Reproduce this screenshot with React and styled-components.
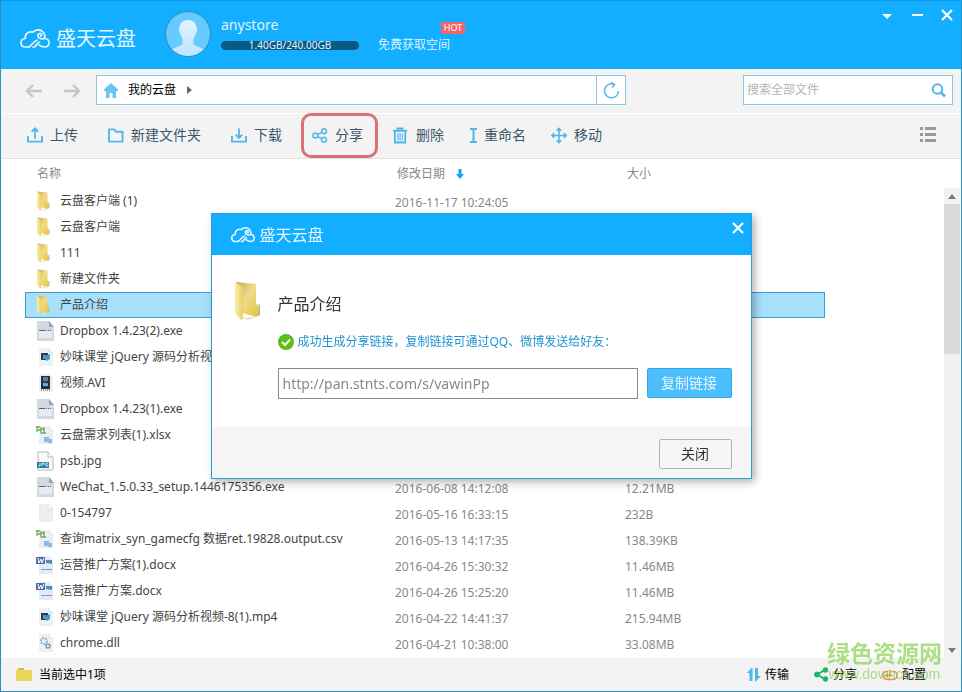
import React from 'react';
import styled, { createGlobalStyle, css } from 'styled-components';

const Global = createGlobalStyle`
  * { box-sizing: border-box; }
  body {
    margin: 0;
    font-family: "Noto Sans", "Noto Sans CJK SC", sans-serif;
    font-size: 12px;
    line-height: 16px;
    color: #444;
    background: #fff;
  }
  button, input { font: inherit; color: inherit; }
  button { padding: 0; border: 0; background: none; cursor: pointer; }
  svg { display: block; flex: none; }
`;

const Window = styled.div`
  position: relative;
  display: flex;
  flex-direction: column;
  min-height: 100vh;
  border: 1px solid #2791c4;
  border-top-color: #0798e6;
  background: #fff;
`;

/* ---------- header ---------- */
const Header = styled.header`
  display: flex;
  align-items: flex-start;
  height: 68px;
  padding: 0 5px 0 19px;
  background: #13aeff;
  color: #fff;
`;
const Brand = styled.div`
  display: flex;
  align-items: center;
  gap: 6px;
  height: 76px;
  font-size: 20px;
  line-height: 28px;
  color: #e6f8ff;
  white-space: nowrap;
`;
const Avatar = styled.div`
  margin: 10px 10px 0 29px;
`;
const Account = styled.div`
  width: 138px;
  padding-top: 14px;
`;
const UserName = styled.div`
  font-size: 14px;
  line-height: 20px;
  color: #e2f5ff;
`;
const Quota = styled.div`
  height: 9px;
  margin-top: 6px;
  border-radius: 5px;
  background: #0a5b84;
  font-size: 10px;
  line-height: 9px;
  text-align: center;
  color: #e8f6ff;
`;
const FreeSpace = styled.a`
  position: relative;
  margin: 36px 0 0 19px;
  color: #d8f3ff;
  text-decoration: none;
  white-space: nowrap;
`;
const HotBadge = styled.span`
  position: absolute;
  left: 63px;
  top: -15px;
  width: 24px;
  border-radius: 2px;
  background: #f4646a;
  color: #fff;
  font-size: 9px;
  line-height: 12px;
  text-align: center;
`;
const WindowControls = styled.div`
  display: flex;
  gap: 14px;
  margin-left: auto;
  padding-top: 5px;
`;

/* ---------- navigation ---------- */
const NavBar = styled.nav`
  display: flex;
  align-items: center;
  height: 45px;
  padding: 0 8px 2px 24px;
  border-bottom: 1px solid #fff;
  background: #f3f3f3;
`;
const Arrows = styled.div`
  display: flex;
  gap: 22px;
  margin-right: 15px;
`;
const Address = styled.div`
  display: flex;
  align-items: center;
  flex: 0 1 530px;
  height: 30px;
  padding-left: 7px;
  border: 1px solid #8fc5e0;
  background: #fff;
  color: #000;
`;
const Crumb = styled.a`
  display: flex;
  align-items: center;
  gap: 10px;
  color: #000;
  text-decoration: none;
`;
const Refresh = styled.button`
  display: grid;
  place-items: center;
  width: 29px;
  height: 28px;
  margin-left: auto;
  border-left: 1px solid #8fc5e0;
`;
const Search = styled.label`
  display: flex;
  align-items: center;
  width: 210px;
  height: 30px;
  margin-left: auto;
  padding: 0 6px 0 3px;
  border: 1px solid #8fc5e0;
  background: #fff;
`;
const SearchInput = styled.input`
  flex: 1;
  min-width: 0;
  padding: 0;
  border: 0;
  outline: 0;
  background: none;
  &::placeholder { color: #b4b4b4; opacity: 1; }
`;

/* ---------- toolbar ---------- */
const Toolbar = styled.div`
  display: flex;
  align-items: center;
  height: 45px;
  padding: 0 24px 2px 26px;
  border-bottom: 1px solid #e0e0e0;
  background: #f3f3f3;
`;
const ActionGroup = styled.div`
  display: flex;
  gap: ${(p) => (p.$tight ? 25 : 30)}px;
  margin-right: 26px;
`;
const Action = styled.button`
  position: relative;
  display: flex;
  align-items: center;
  gap: 7px;
  font-size: 14px;
  line-height: 20px;
  color: #3c566b;
  white-space: nowrap;
  ${(p) => p.$marked && css`
    &::after {
      content: "";
      position: absolute;
      inset: -12px -15px -13px -11px;
      border: 3px solid #d97274;
      border-radius: 10px;
    }
  `}
`;
const ViewToggle = styled.button`
  margin-left: auto;
`;

/* ---------- file list ---------- */
const Main = styled.main`
  display: flex;
  flex: 1;
  padding-right: 1px;
`;
const ListArea = styled.div`
  flex: 1;
  min-width: 0;
  padding-left: 24px;
`;
const FileTable = styled.table`
  width: 100%;
  max-width: 800px;
  border-collapse: collapse;
  table-layout: fixed;
`;
const Column = styled.col`
  width: ${(p) => p.$share}%;
`;
const HeadCell = styled.th`
  height: 29px;
  padding: 0 0 0 ${(p) => (p.$first ? 12 : 2)}px;
  font-weight: 400;
  text-align: left;
  color: #888;
`;
const HeadLabel = styled.span`
  display: flex;
  align-items: center;
  gap: 11px;
`;
const Row = styled.tr`
  height: 26px;
  ${(p) => p.$selected && css`
    background: #a6e0fd;
    outline: 1px solid #3b9fcd;
    outline-offset: -1px;
  `}
`;
const NameCell = styled.td`
  padding: 0 0 0 11px;
`;
const FileName = styled.span`
  display: flex;
  align-items: center;
  gap: 6px;
  white-space: nowrap;
`;
const MetaCell = styled.td`
  padding: 4px 0 0;
  color: #888;
  white-space: nowrap;
`;
const Scrollbar = styled.div`
  display: flex;
  flex-direction: column;
  width: 16px;
  margin-top: 29px;
  background: #f1f1f1;
`;
const ScrollButton = styled.button`
  display: grid;
  place-items: center;
  height: 16px;
`;
const Thumb = styled.div`
  flex: 0 0 32%;
  background: #dadada;
`;
const TrackSpace = styled.div`
  flex: 1;
`;

/* ---------- footer ---------- */
const Footer = styled.footer`
  display: flex;
  align-items: center;
  height: 33px;
  padding: 0 35px 0 15px;
  background: #f3f3f3;
  color: #000;
`;
const Status = styled.div`
  display: flex;
  align-items: center;
  gap: 7px;
  margin-right: auto;
`;
const FooterButton = styled.button`
  display: flex;
  align-items: center;
  gap: 4px;
  margin-left: 25px;
`;
const Watermark = styled.div`
  position: absolute;
  right: 19px;
  bottom: 10px;
  color: #8fd45c;
  text-align: center;
  opacity: 0.75;
  pointer-events: none;
`;
const WatermarkName = styled.div`
  font-size: 23px;
  font-weight: 700;
  line-height: 28px;
`;
const WatermarkSite = styled.div`
  font-family: "Liberation Sans", sans-serif;
  font-size: 14px;
  line-height: 14px;
`;

/* ---------- dialog ---------- */
const Overlay = styled.div`
  position: fixed;
  inset: 0;
  display: grid;
  place-items: center;
`;
const Dialog = styled.section`
  width: 541px;
  max-width: 100%;
  border: 1px solid #2a9fd6;
  background: #fff;
  box-shadow: 3px 3px 8px rgba(0, 0, 0, 0.3);
`;
const DialogHeader = styled.header`
  display: flex;
  align-items: center;
  gap: 5px;
  height: 41px;
  padding: 0 4px 0 19px;
  background: #13aeff;
  color: #e6f8ff;
`;
const DialogTitle = styled.h1`
  margin: 0;
  font-size: 16px;
  font-weight: 400;
  line-height: 24px;
`;
const DialogClose = styled.button`
  margin-left: auto;
  padding-bottom: 14px;
`;
const DialogBody = styled.div`
  display: grid;
  grid-template-columns: 44px 1fr;
  padding: 26px 19px 28px 22px;
`;
const ShareInfo = styled.div`
  display: flex;
  flex-direction: column;
  gap: 16px;
  padding-top: 11px;
`;
const ItemName = styled.h2`
  margin: 0;
  font-size: 16px;
  font-weight: 400;
  line-height: 24px;
  color: #333;
`;
const Success = styled.p`
  display: flex;
  align-items: center;
  gap: 4px;
  margin: 0;
  line-height: 20px;
  color: #1f93d3;
`;
const LinkRow = styled.div`
  display: flex;
  gap: 9px;
`;
const LinkInput = styled.input`
  flex: 1;
  min-width: 0;
  height: 31px;
  padding: 0 4px;
  border: 1px solid #8a8a8a;
  background: #fff;
  font-size: 14px;
  color: #888;
`;
const CopyButton = styled.button`
  width: 85px;
  height: 30px;
  border: 1px solid #2fa8ea;
  border-radius: 2px;
  background: #4bbefb;
  font-size: 14px;
  color: #e4f6ff;
`;
const DialogFooter = styled.footer`
  display: flex;
  justify-content: flex-end;
  padding: 12px 19px 9px;
  background: #f5f5f5;
`;
const CloseButton = styled.button`
  width: 73px;
  height: 30px;
  border: 1px solid #b4b4b4;
  border-radius: 2px;
  font-size: 14px;
  color: #333;
`;

/* ---------- drawings ---------- */
const Cloud = ({ width, stroke = 1.7 }) => (
  <svg width={width} height={width * 2 / 3} viewBox="0 0 30 20" fill="none" stroke="#e6f8ff" strokeWidth={stroke} strokeLinecap="round" strokeLinejoin="round">
    <path d="M9 18H5.500C2.800 18 1 16.300 1 14C1 11.500 2.800 9.700 5.300 9.500C4.600 5 8.500 1.800 12.800 3.200C15.500 .3 20.500 .2 23 3C24.800 4.800 25.200 7 24.500 9.500C27.300 9.600 29 11.500 29 13.800C29 16.300 27.200 18 24.500 18C22 18 20.500 17.300 18.800 15.800" />
    <path d="M9 18C12 16 13.500 12.500 17 11.200M13 18H14.500C16.500 16.500 17 13.500 19.500 13" />
    <path d="M24.500 9.500C21.500 10.500 18 9.300 17.800 6.800C17.700 4.800 20 3.800 21.300 5C22.200 6 21.500 7.200 20.500 7" />
  </svg>
);
const Person = () => (
  <svg width="46" height="46" viewBox="0 0 46 46">
    <defs>
      <clipPath id="face"><circle cx="23" cy="23" r="22" /></clipPath>
      <linearGradient id="skin" x2="0" y2="1"><stop stopColor="#e3f5ff" /><stop offset="1" stopColor="#b9e3ff" /></linearGradient>
    </defs>
    <circle cx="23" cy="23" r="22.500" fill="#66caff" stroke="#3189bd" />
    <path clipPath="url(#face)" fill="url(#skin)" d="M23 9C28 9 31.500 12 31.500 17C32.500 17.500 32.200 20.500 31 21.500C30.500 25 29 26.500 28.500 28V33C31 36 38 36 41 41V47H4V41C8 36 15 36 17.500 33V28C17 26.500 15.500 25 15 21.500C13.800 20.500 13.500 17.500 14.500 17C14.500 12 18 9 23 9Z" />
  </svg>
);
const Cross = () => (
  <svg width="18" height="18" viewBox="0 0 18 18" stroke="#fff" strokeWidth="2.200"><path d="M4 4L14 14M14 4L4 14" /></svg>
);
const NavArrow = ({ forward }) => (
  <svg width="17" height="16" viewBox="0 0 17 16" fill="none" stroke="#c6c6c6" strokeWidth="2.400">
    <path d={forward ? 'M0 9H15M9 3L15 9L9 15' : 'M17 9H2M8 3L2 9L8 15'} />
  </svg>
);
const blue = '#53b6e9';
const iconPaths = {
  upload: <path d="M1 9V15H16V9M8.500 12V1M5 4.500L8.500 1L12 4.500" />,
  newFolder: <path d="M1 2H6.500L8.500 4.500H15.500V15H1Z" strokeLinejoin="round" />,
  download: <path d="M1 9V15H16V9M8.500 1V11M5 7.500L8.500 11L12 7.500" />,
  share: <><circle cx="3.500" cy="8.500" r="2.600" /><circle cx="12.800" cy="4" r="2.600" /><circle cx="12.800" cy="13" r="2.600" /><path d="M6 7.500L10.500 5M6 9.700L10.500 12" /></>,
  remove: <><path d="M0 3.500H15M5 3V1H10V3M2 4V16H13V4" /><path d="M5.200 6V14M7.500 6V14M9.800 6V14" strokeWidth="1.200" /></>,
  rename: <path d="M0 2H7M0 15H7M3.500 2V15" />,
  move: <path d="M8.500 1V16M1 8.500H16M6 3.500L8.500 1L11 3.500M6 13.500L8.500 16L11 13.500M3.500 6L1 8.500L3.500 11M13.500 6L16 8.500L13.500 11" strokeWidth="1.700" />,
};
const ToolIcon = ({ name }) => {
  const narrow = name === 'rename';
  return (
    <svg width={narrow ? 7 : 16} height="17" viewBox={narrow ? '0 0 7 17' : '0 0 17 17'} fill="none" stroke={blue} strokeWidth={name === 'share' ? 1.600 : 2}>
      {iconPaths[name]}
    </svg>
  );
};
const Folder = ({ large }) => (
  <svg width={large ? 28 : 18} height={large ? 40 : 20} viewBox={large ? '0 0 28 40' : '-1 0 36 40'}>
    <defs>
      <linearGradient id="flap"><stop stopColor="#fbf1a5" /><stop offset="1" stopColor="#e8cf68" /></linearGradient>
      <linearGradient id="back" x2="1" y2="1"><stop stopColor="#c9a94f" /><stop offset=".45" stopColor="#efdb8b" /><stop offset="1" stopColor="#e6c23e" /></linearGradient>
    </defs>
    <path d="M8 37L22 36L14 39Z" fill="#ddd" />
    <path d="M2 1L22 3V23L25 26V34L22 36L8 32Z" fill="url(#back)" />
    <path d="M23 24H25.500V34H23" fill="none" stroke="#a9b2a0" />
    <path d="M1 1L8 6Q9 7 9 10V38L7 39L1 32Z" fill="url(#flap)" />
  </svg>
);
const sheet = (
  <>
    <path d="M3 1H13L17 5V19H3Z" fill="#eef0f2" />
    <path d="M13 1V5H17" fill="#fff" stroke="#ccd2d7" strokeWidth=".7" />
  </>
);
const fileArt = {
  exe: <><path d="M1 0H13L18 6V20H1Z" fill="#d3d9e1" /><path d="M13 0V6H18Z" fill="#98a5b5" /><path d="M3 10H16V17H3Z" fill="#e7ebef" /><path d="M3 9.500H9" stroke="#536477" /><path d="M10 9.500H16" stroke="#536477" strokeDasharray="1 1" /></>,
  video: <>{sheet}<path d="M5 6H12V13H5Z" fill="#27404f" /><path d="M7 8H10V12H7Z" fill="#7d8f8e" /><path d="M11 8L14 7V12L11 14L9 12Z" fill="#39a0dc" /></>,
  avi: <>{sheet}<path d="M5 3H14V16H5Z" fill="#26313c" /><path d="M7 4H12V8H7Z" fill="#3f86b8" /><path d="M7 10H12V13H7Z" fill="#6db3d8" /><path d="M8 8L11 11" stroke="#c0392b" /><path d="M5 17H14" stroke="#444" strokeDasharray="1 1" /></>,
  sheet: <><path d="M3 1H13L17 5V19H3Z" fill="#e6f0f6" /><path d="M0 1H10V9H0Z" fill="#fff" opacity=".6" /><path d="M0 2H4M1 2V7M5 2V9M5 4H9M6 8H10M8 2V8M2 5H5" stroke="#6da655" strokeWidth="1.300" fill="none" /><path d="M8 12H13V17H8ZM12 14H16V18H12Z" fill="#8fb9df" /></>,
  jpg: <><path d="M2 1H12L17 6V19H2Z" fill="#f8f9fa" stroke="#b4bbc1" /><path d="M12 1V6H17" fill="#fff" stroke="#b4bbc1" /><path d="M1 11H13V17H1Z" fill="#267f9e" /><path d="M4 12V15H2.500M6 15V12H8V14M10 12H12M10 12V15H12V14" stroke="#d6eef7" fill="none" /></>,
  blank: <><path d="M3 1H12L17 6V19H3Z" fill="#eeeeef" /><path d="M12 1L17 6H12Z" fill="#fff" stroke="#d8d8d8" strokeWidth=".7" /></>,
  doc: <><path d="M3 1H13L17 5V19H3Z" fill="#e3ebf8" /><path d="M0 2H9V9H0Z" fill="#4a6fae" /><path d="M2 3L3 8L5 4L6 8L8 3" stroke="#fff" fill="none" /><path d="M10 5H16V9L10 8Z" fill="#568da5" /><path d="M5 14.500H16" stroke="#8296c0" /></>,
  dll: <>{sheet}<circle cx="8" cy="8" r="3" fill="none" stroke="#8ab8d6" strokeWidth="2" strokeDasharray="2 1" /><circle cx="12" cy="13" r="2" fill="none" stroke="#7f9bb3" strokeWidth="1.500" /></>,
};
const FileIcon = ({ type }) =>
  type === 'folder' ? <Folder /> : <svg width="18" height="20" viewBox="0 0 18 20">{fileArt[type]}</svg>;

const files = [
  ['folder', '云盘客户端 (1)', '2016-11-17 10:24:05'],
  ['folder', '云盘客户端'],
  ['folder', '111'],
  ['folder', '新建文件夹'],
  ['folder', '产品介绍'],
  ['exe', 'Dropbox 1.4.23(2).exe'],
  ['video', '妙味课堂 jQuery 源码分析视'],
  ['avi', '视频.AVI'],
  ['exe', 'Dropbox 1.4.23(1).exe'],
  ['sheet', '云盘需求列表(1).xlsx'],
  ['jpg', 'psb.jpg'],
  ['exe', 'WeChat_1.5.0.33_setup.1446175356.exe', '2016-06-08 14:12:08', '12.21MB'],
  ['blank', '0-154797', '2016-05-16 16:33:15', '232B'],
  ['sheet', '查询matrix_syn_gamecfg 数据ret.19828.output.csv', '2016-05-13 14:17:35', '138.39KB'],
  ['doc', '运营推广方案(1).docx', '2016-04-26 15:30:32', '11.46MB'],
  ['doc', '运营推广方案.docx', '2016-04-26 15:25:20', '11.46MB'],
  ['video', '妙味课堂 jQuery 源码分析视频-8(1).mp4', '2016-04-22 14:41:37', '215.94MB'],
  ['dll', 'chrome.dll', '2016-04-21 10:38:00', '33.08MB'],
];
const actions = [
  ['upload', '上传'],
  ['newFolder', '新建文件夹'],
  ['download', '下载'],
  ['share', '分享'],
  ['remove', '删除'],
];
const editActions = [
  ['rename', '重命名'],
  ['move', '移动'],
];

const ActionButton = ({ name, label }) => (
  <Action type="button" $marked={name === 'share'}>
    <ToolIcon name={name} />
    {label}
  </Action>
);

export default function App() {
  return (
    <Window lang="zh-CN">
      <Global />
      <Header>
        <Brand><Cloud width={30} />盛天云盘</Brand>
        <Avatar><Person /></Avatar>
        <Account>
          <UserName>anystore</UserName>
          <Quota>1.40GB/240.00GB</Quota>
        </Account>
        <FreeSpace href="#space">免费获取空间<HotBadge>HOT</HotBadge></FreeSpace>
        <WindowControls>
          <button type="button" aria-label="菜单">
            <svg width="16" height="18" viewBox="0 0 16 18"><path d="M2 8H12L7 13Z" fill="#fff" /></svg>
          </button>
          <button type="button" aria-label="最小化">
            <svg width="14" height="18" viewBox="0 0 14 18"><path d="M2 8H13V10H2Z" fill="#fff" /></svg>
          </button>
          <button type="button" aria-label="退出"><Cross /></button>
        </WindowControls>
      </Header>

      <NavBar>
        <Arrows>
          <button type="button" aria-label="后退"><NavArrow /></button>
          <button type="button" aria-label="前进"><NavArrow forward /></button>
        </Arrows>
        <Address>
          <Crumb href="#home">
            <svg width="14" height="15" viewBox="0 0 14 15"><path d="M7 0L14 6.500V8H12V15H8.500V10H5.500V15H2V8H0V6.500Z" fill="#66c3f3" /></svg>
            我的云盘
            <svg width="6" height="8" viewBox="0 0 6 8"><path d="M1 0L6 4L1 8Z" fill="#666" /></svg>
          </Crumb>
          <Refresh type="button" aria-label="刷新">
            <svg width="17" height="17" viewBox="0 0 17 17" fill="none" stroke={blue} strokeWidth="1.500"><path d="M11.500 2.500A7 7 0 1 0 15.500 9M8 .3L11.500 2.500L9.300 5.500" /></svg>
          </Refresh>
        </Address>
        <Search>
          <SearchInput type="text" placeholder="搜索全部文件" aria-label="搜索全部文件" />
          <svg width="15" height="15" viewBox="0 0 15 15" fill="none" stroke={blue} strokeWidth="2"><circle cx="6.500" cy="6" r="4.800" /><path d="M10 9.500L14 13.500" strokeWidth="2.500" /></svg>
        </Search>
      </NavBar>

      <Toolbar>
        <ActionGroup>
          {actions.map(([name, label]) => <ActionButton key={name} name={name} label={label} />)}
        </ActionGroup>
        <ActionGroup $tight>
          {editActions.map(([name, label]) => <ActionButton key={name} name={name} label={label} />)}
        </ActionGroup>
        <ViewToggle type="button" aria-label="列表视图">
          <svg width="18" height="16" viewBox="0 0 18 16" fill="#999"><path d="M1 0H4V3H1ZM6 0H17V3H6ZM1 6H4V9H1ZM6 6H17V9H6ZM1 12H4V15H1ZM6 12H17V15H6Z" /></svg>
        </ViewToggle>
      </Toolbar>

      <Main>
        <ListArea>
          <FileTable>
            <colgroup>
              <Column $share={46.25} />
              <Column $share={28.75} />
              <Column $share={25} />
            </colgroup>
            <thead>
              <tr>
                <HeadCell $first>名称</HeadCell>
                <HeadCell>
                  <HeadLabel>
                    修改日期
                    <svg width="8" height="10" viewBox="0 0 8 10"><path d="M2.500 0H5.500V5H8L4 10L0 5H2.500Z" fill="#13a3ee" /></svg>
                  </HeadLabel>
                </HeadCell>
                <HeadCell>大小</HeadCell>
              </tr>
            </thead>
            <tbody>
              {files.map(([type, name, date, size]) => (
                <Row key={name} $selected={name === '产品介绍'}>
                  <NameCell><FileName><FileIcon type={type} />{name}</FileName></NameCell>
                  <MetaCell>{date}</MetaCell>
                  <MetaCell>{size}</MetaCell>
                </Row>
              ))}
            </tbody>
          </FileTable>
        </ListArea>
        <Scrollbar>
          <ScrollButton type="button" aria-label="向上">
            <svg width="8" height="5" viewBox="0 0 8 5"><path d="M4 0L8 5H0Z" fill="#777" /></svg>
          </ScrollButton>
          <Thumb />
          <TrackSpace />
          <ScrollButton type="button" aria-label="向下">
            <svg width="8" height="5" viewBox="0 0 8 5"><path d="M0 0H8L4 5Z" fill="#777" /></svg>
          </ScrollButton>
        </Scrollbar>
      </Main>

      <Footer>
        <Status>
          <svg width="16" height="13" viewBox="0 0 16 13"><path d="M0 2H2V0H8V2H16V13H0Z" fill="#e9d65e" /><path d="M2 0H8V2H2Z" fill="#d2bc3c" /></svg>
          当前选中1项
        </Status>
        <FooterButton type="button">
          <svg width="14" height="15" viewBox="0 0 14 15" fill={blue}><path d="M5.500 0V14H2.500V6H0ZM8 1H11V9H14L8 15Z" /></svg>
          传输
        </FooterButton>
        <FooterButton type="button">
          <svg width="15" height="15" viewBox="0 0 15 15" fill="#1bb56d" stroke="#1bb56d"><circle cx="3" cy="7.500" r="2.500" /><circle cx="11.500" cy="3" r="2.300" /><circle cx="11.500" cy="12" r="2.300" /><path d="M11 3L3 7.500L11 12" fill="none" strokeWidth="2" /></svg>
          分享
        </FooterButton>
        <FooterButton type="button">
          <svg width="16" height="14" viewBox="0 0 18 14" fill="none" stroke="#ee8b4a" strokeWidth="1.800"><path d="M7 3H5.500A4.500 4.500 0 0 0 5.500 12H12.500A4.500 4.500 0 0 0 12.500 3H11M9 1V7M4.500 7.500H12M6.500 5.500L4.500 7.500L6.500 9.500" /></svg>
          配置
        </FooterButton>
      </Footer>

      <Overlay>
        <Dialog role="dialog" aria-labelledby="dialog-title">
          <DialogHeader>
            <Cloud width={24} stroke={1.9} />
            <DialogTitle id="dialog-title">盛天云盘</DialogTitle>
            <DialogClose type="button" aria-label="关闭窗口"><Cross /></DialogClose>
          </DialogHeader>
          <DialogBody>
            <Folder large />
            <ShareInfo>
              <ItemName>产品介绍</ItemName>
              <Success>
                <svg width="16" height="16" viewBox="0 0 16 16"><circle cx="8" cy="8" r="8" fill="#5bbd1b" /><path d="M4 8L7 11L12 5.500" fill="none" stroke="#fff" strokeWidth="2" /></svg>
                成功生成分享链接，复制链接可通过QQ、微博发送给好友：
              </Success>
              <LinkRow>
                <LinkInput type="text" aria-label="分享链接" readOnly value="http://pan.stnts.com/s/vawinPp" />
                <CopyButton type="button">复制链接</CopyButton>
              </LinkRow>
            </ShareInfo>
          </DialogBody>
          <DialogFooter><CloseButton type="button">关闭</CloseButton></DialogFooter>
        </Dialog>
      </Overlay>

      <Watermark>
        <WatermarkName>绿色资源网</WatermarkName>
        <WatermarkSite>www.downcc.com</WatermarkSite>
      </Watermark>
    </Window>
  );
}
